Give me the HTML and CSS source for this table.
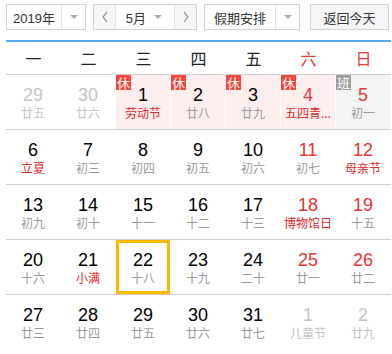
FILE: index.html
```html
<!DOCTYPE html>
<html lang="zh">
<head>
<meta charset="utf-8">
<link rel="stylesheet" href="styles.css">
</head>
<body>
<div class="cal">
  <div class="toolbar">
    <div class="select year"><span class="val">2019年</span><span class="drop"><i class="tri"></i></span></div>
    <div class="month">
      <span class="nav"><svg width="8" height="12" viewBox="0 0 8 12"><polyline points="6,1 2,6 6,11" fill="none" stroke="#888" stroke-width="1.2"/></svg></span>
      <span class="mval">5月</span><span class="mdrop"><i class="tri"></i></span>
      <span class="nav"><svg width="8" height="12" viewBox="0 0 8 12"><polyline points="2,1 6,6 2,11" fill="none" stroke="#888" stroke-width="1.2"/></svg></span>
    </div>
    <div class="select holiday"><span class="val">假期安排</span><span class="drop"><i class="tri"></i></span></div>
    <div class="today">返回今天</div>
  </div>

  <div class="head">
    <span>一</span><span>二</span><span>三</span><span>四</span><span>五</span><span class="red">六</span><span class="red">日</span>
  </div>

  <div class="week">
    <div class="cell other"><b>29</b><em>廿五</em></div>
    <div class="cell other"><b>30</b><em>廿六</em></div>
    <div class="cell rest"><i class="badge">休</i><b>1</b><em class="fest">劳动节</em></div>
    <div class="cell rest"><i class="badge">休</i><b>2</b><em>廿八</em></div>
    <div class="cell rest"><i class="badge">休</i><b>3</b><em>廿九</em></div>
    <div class="cell rest"><i class="badge">休</i><b class="r">4</b><em class="fest">五四青...</em></div>
    <div class="cell work"><i class="badge gray">班</i><b class="r">5</b><em>初一</em></div>
  </div>
  <div class="week">
    <div class="cell"><b>6</b><em class="fest">立夏</em></div>
    <div class="cell"><b>7</b><em>初三</em></div>
    <div class="cell"><b>8</b><em>初四</em></div>
    <div class="cell"><b>9</b><em>初五</em></div>
    <div class="cell"><b>10</b><em>初六</em></div>
    <div class="cell"><b class="r">11</b><em>初七</em></div>
    <div class="cell"><b class="r">12</b><em class="fest">母亲节</em></div>
  </div>
  <div class="week">
    <div class="cell"><b>13</b><em>初九</em></div>
    <div class="cell"><b>14</b><em>初十</em></div>
    <div class="cell"><b>15</b><em>十一</em></div>
    <div class="cell"><b>16</b><em>十二</em></div>
    <div class="cell"><b>17</b><em>十三</em></div>
    <div class="cell"><b class="r">18</b><em class="fest">博物馆日</em></div>
    <div class="cell"><b class="r">19</b><em>十五</em></div>
  </div>
  <div class="week">
    <div class="cell"><b>20</b><em>十六</em></div>
    <div class="cell"><b>21</b><em class="fest">小满</em></div>
    <div class="cell sel"><b>22</b><em>十八</em></div>
    <div class="cell"><b>23</b><em>十九</em></div>
    <div class="cell"><b>24</b><em>二十</em></div>
    <div class="cell"><b class="r">25</b><em>廿一</em></div>
    <div class="cell"><b class="r">26</b><em>廿二</em></div>
  </div>
  <div class="week last">
    <div class="cell"><b>27</b><em>廿三</em></div>
    <div class="cell"><b>28</b><em>廿四</em></div>
    <div class="cell"><b>29</b><em>廿五</em></div>
    <div class="cell"><b>30</b><em>廿六</em></div>
    <div class="cell"><b>31</b><em>廿七</em></div>
    <div class="cell other"><b>1</b><em>儿童节</em></div>
    <div class="cell other"><b>2</b><em>廿九</em></div>
  </div>
</div>
</body>
</html>
```

FILE: styles.css
```css
* { box-sizing: border-box; }
html, body { margin: 0; padding: 0; background: #fff; }
body {
  font-family: Arial, "Liberation Sans", "Noto Sans CJK SC", sans-serif;
  color: #000;
  width: 392px;
  height: 354px;
  overflow: hidden;
}
.cal { padding: 4px 1px 0 6px; }

.toolbar {
  display: flex;
  align-items: stretch;
  height: 26px;
  font-size: 13px;
  color: #333;
}
.select {
  display: flex;
  border: 1px solid #d2d2d2;
  background: #fff;
}
.select .val {
  flex: 1;
  display: flex;
  align-items: center;
  justify-content: center;
}
.select .drop {
  width: 24px;
  border-left: 1px solid #e2e2e2;
  display: flex;
  align-items: center;
  justify-content: center;
}
.tri {
  display: block;
  width: 0; height: 0;
  border-left: 4px solid transparent;
  border-right: 4px solid transparent;
  border-top: 4px solid #a8a8a8;
}
.year { width: 80px; }
.month {
  margin-left: 7px;
  width: 104px;
  display: flex;
  border: 1px solid #d2d2d2;
}
.month .nav {
  width: 22px;
  background: #f6f6f6;
  display: flex;
  align-items: center;
  justify-content: center;
}
.month .nav:first-child { border-right: 1px solid #e2e2e2; }
.month .nav:last-child { border-left: 1px solid #e2e2e2; }
.mval {
  flex: 1;
  display: flex;
  align-items: center;
  justify-content: flex-end;
  padding-right: 6px;
}
.mdrop {
  width: 22px;
  display: flex;
  align-items: center;
  justify-content: flex-start;
  padding-left: 2px;
}
.holiday { margin-left: 7px; width: 96px; }
.holiday .drop { width: 24px; }
.today {
  margin-left: 10px;
  width: 79px;
  border: 1px solid #d2d2d2;
  background: #f6f6f6;
  display: flex;
  align-items: center;
  justify-content: center;
}

.head {
  margin-top: 10px;
  border-top: 2px solid #5aa9f4;
  border-bottom: 1px solid #cfcfcf;
  height: 35px;
  display: grid;
  grid-template-columns: repeat(7, 55px);
  align-items: center;
  font-size: 16px;
  color: #222;
  font-family: "Noto Sans CJK SC", sans-serif;
}
.head span { text-align: center; }
.head .red { color: #e83a3a; }

.week {
  display: grid;
  grid-template-columns: repeat(7, 54px);
  column-gap: 1px;
  height: 55px;
  border-bottom: 1px solid #cfcfcf;
}
.week.last { border-bottom: 0; }

.cell {
  position: relative;
  height: 54px;
  padding-top: 10px;
  text-align: center;
}
.cell b {
  display: block;
  font-weight: normal;
  font-size: 18px;
  line-height: 20px;
  color: #000;
}
.cell em {
  display: block;
  font-style: normal;
  font-size: 12px;
  line-height: 16px;
  color: #9a9a9a;
  font-family: "Noto Sans CJK SC", sans-serif;
  white-space: nowrap;
}
.cell b.r { color: #ec3232; }
.cell em.fest { color: #e02828; }
.cell.other b, .cell.other em { color: #c4c4c4; }
.cell.rest { background: #fdeeee; }
.cell.work { background: #f4f4f4; }
.cell.sel { box-shadow: inset 0 0 0 3px #fbb900; }

.badge {
  position: absolute;
  left: 0;
  top: 0;
  width: 15px;
  height: 15px;
  background: #f4473b;
  color: #fff;
  font-style: normal;
  font-size: 13px;
  line-height: 15px;
  text-align: center;
  font-family: "Noto Sans CJK SC", sans-serif;
}
.badge.gray { background: #9d9d9d; }
```
